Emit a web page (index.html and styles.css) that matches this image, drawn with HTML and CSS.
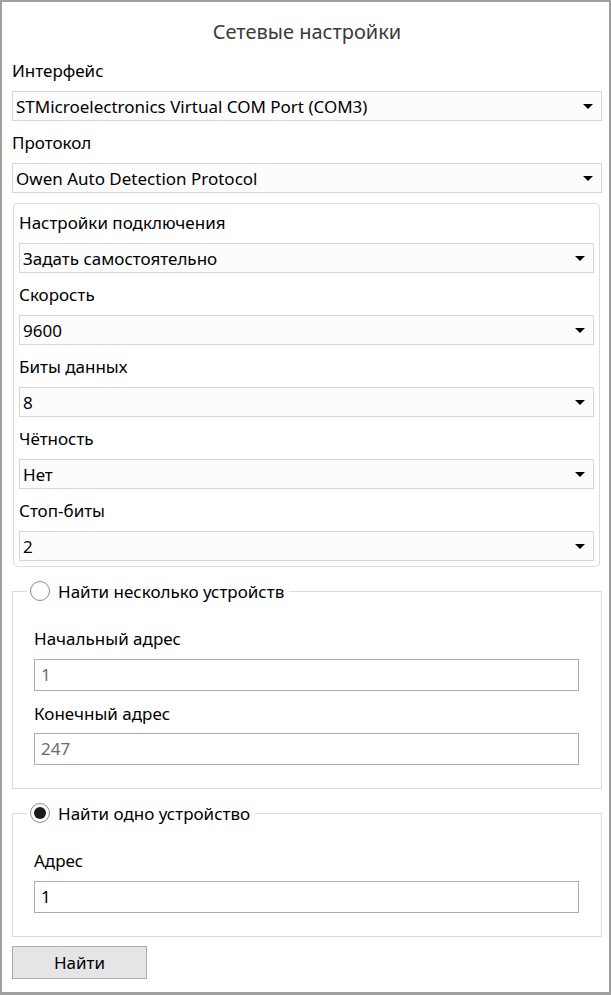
FILE: index.html
```html
<!DOCTYPE html>
<html lang="ru">
<head>
<meta charset="utf-8">
<link rel="stylesheet" href="styles.css">
</head>
<body>
<div class="window">
  <div class="title">Сетевые настройки</div>

  <div class="label">Интерфейс</div>
  <div class="combo combo-wide"><span>STMicroelectronics Virtual COM Port (COM3)</span><i class="arrow"></i></div>

  <div class="label">Протокол</div>
  <div class="combo combo-wide"><span>Owen Auto Detection Protocol</span><i class="arrow"></i></div>

  <div class="group">
    <div class="label label-first">Настройки подключения</div>
    <div class="combo"><span>Задать самостоятельно</span><i class="arrow"></i></div>
    <div class="label">Скорость</div>
    <div class="combo"><span>9600</span><i class="arrow"></i></div>
    <div class="label">Биты данных</div>
    <div class="combo"><span>8</span><i class="arrow"></i></div>
    <div class="label">Чётность</div>
    <div class="combo"><span>Нет</span><i class="arrow"></i></div>
    <div class="label">Стоп-биты</div>
    <div class="combo"><span>2</span><i class="arrow"></i></div>
  </div>

  <fieldset class="fs">
    <legend class="legend"><span class="radio"></span><span>Найти несколько устройств</span></legend>
    <div class="label label-fs-first">Начальный адрес</div>
    <div class="input disabled">1</div>
    <div class="label">Конечный адрес</div>
    <div class="input disabled">247</div>
  </fieldset>

  <fieldset class="fs">
    <legend class="legend"><span class="radio checked"></span><span>Найти одно устройство</span></legend>
    <div class="label label-fs-first">Адрес</div>
    <div class="input">1</div>
  </fieldset>

  <div class="button">Найти</div>
</div>
</body>
</html>
```

FILE: styles.css
```css
* { box-sizing: border-box; }
html, body { margin: 0; padding: 0; background: #fff; }
body {
  font-family: "Noto Sans", "Open Sans", sans-serif;
  font-size: 17px;
  color: #000;
}
.window {
  width: 611px;
  height: 995px;
  border: 2px solid #a0a0a0;
  border-bottom-width: 3px;
  padding: 0 7px 0 10px;
  display: flex;
  flex-direction: column;
  align-items: stretch;
}
.title {
  text-align: center;
  font-size: 20px;
  color: #3a3a3a;
  line-height: 28px;
  padding: 16px 0 3px;
}
.label {
  line-height: 24px;
  padding: 10px 0 8px;
  white-space: nowrap;
}
.combo {
  height: 30px;
  border: 1px solid #d6d6d6;
  background: #fcfcfc;
  display: flex;
  align-items: center;
  justify-content: space-between;
  padding: 0 8px 0 3px;
  white-space: nowrap;
}
.arrow {
  width: 0;
  height: 0;
  border-left: 5px solid transparent;
  border-right: 5px solid transparent;
  border-top: 5px solid #000;
}
.group {
  margin: 10px 2px 0 1px;
  border: 1px solid #d5dfe6;
  border-radius: 4px;
  padding: 0 5px 5px;
  display: flex;
  flex-direction: column;
}
.group .label { padding-top: 10px; padding-bottom: 8px; }
.group .label.label-first { padding-top: 7px; padding-bottom: 8px; }
.fs {
  margin: 12px 0 0;
  border: 1px solid #dcdcdc;
  padding: 0 22px 23px 21px;
  min-width: 0;
}
.legend {
  display: flex;
  align-items: center;
  gap: 8px;
  height: 24px;
  padding: 0 5px 0 3px;
  margin-left: -7px;
}
.radio {
  width: 20px;
  height: 20px;
  border-radius: 50%;
  border: 1px solid #8a8a8a;
  background: #fff;
  display: flex;
  align-items: center;
  justify-content: center;
}
.radio.checked::after {
  content: "";
  width: 12px;
  height: 12px;
  border-radius: 50%;
  background: #1a1a1a;
}
.fs .label { padding: 11px 0 7px; }
.fs .label.label-fs-first { padding: 24px 0 8px; }
.input {
  height: 32px;
  border: 1px solid #ababab;
  background: #fff;
  line-height: 30px;
  padding-left: 6px;
}
.input.disabled { color: #6d6d6d; }
.button {
  margin-top: 9px;
  width: 135px;
  height: 33px;
  border: 1px solid #adadad;
  background: #e5e5e5;
  text-align: center;
  line-height: 31px;
}
```
